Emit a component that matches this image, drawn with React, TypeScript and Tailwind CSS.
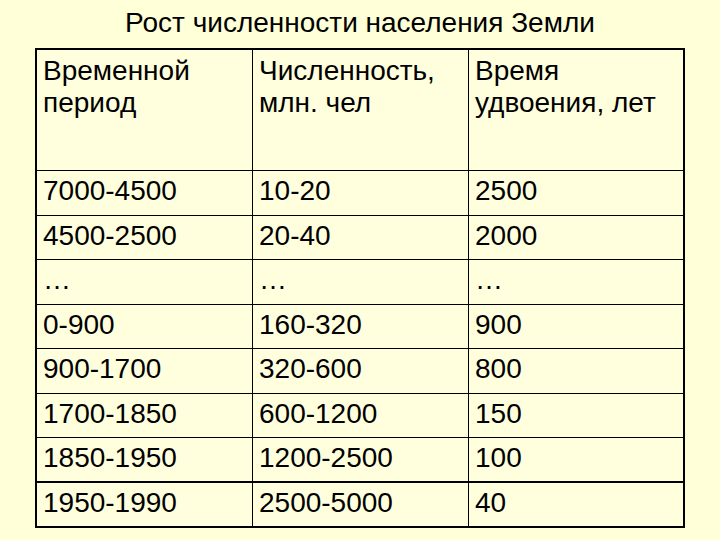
import React from "react";

const rows: { cells: [string, string, string]; h: string; border: string }[] = [
  { cells: ["7000-4500", "10-20", "2500"], h: "h-[45px]", border: "border-b" },
  { cells: ["4500-2500", "20-40", "2000"], h: "h-[44px]", border: "border-b" },
  { cells: ["…", "…", "…"], h: "h-[45px]", border: "border-b" },
  { cells: ["0-900", "160-320", "900"], h: "h-[44px]", border: "border-b" },
  { cells: ["900-1700", "320-600", "800"], h: "h-[45px]", border: "border-b" },
  { cells: ["1700-1850", "600-1200", "150"], h: "h-[44px]", border: "border-b" },
  { cells: ["1850-1950", "1200-2500", "100"], h: "h-[45px]", border: "border-b-2" },
  { cells: ["1950-1990", "2500-5000", "40"], h: "h-[43px]", border: "" },
];

export default function App() {
  return (
    <div className="w-[720px] h-[540px] bg-[#ffffd8] text-black font-['Liberation_Sans',Arial,sans-serif] overflow-hidden">
      <h1 className="pt-[8px] text-center text-[28px] leading-[30px] font-normal">
        Рост численности населения Земли
      </h1>
      <div className="ml-[35px] mt-[10px] w-[650px] border-2 border-black bg-[#ffffde] text-[28px] leading-[32px]">
        <div className="grid grid-cols-[216px_216px_214px] h-[121px] border-b border-black">
          <div className="border-r border-black px-[6px] pt-[5px]">
            Временной
            <br />
            период
          </div>
          <div className="border-r border-black px-[6px] pt-[5px]">
            Численность,
            <br />
            млн. чел
          </div>
          <div className="px-[6px] pt-[5px]">
            Время
            <br />
            удвоения, лет
          </div>
        </div>
        {rows.map((r, i) => (
          <div
            key={i}
            className={`grid grid-cols-[216px_216px_214px] border-black ${r.h} ${r.border}`}
          >
            <div className="border-r border-black px-[6px] pt-[4px]">{r.cells[0]}</div>
            <div className="border-r border-black px-[6px] pt-[4px]">{r.cells[1]}</div>
            <div className="px-[6px] pt-[4px]">{r.cells[2]}</div>
          </div>
        ))}
      </div>
    </div>
  );
}
